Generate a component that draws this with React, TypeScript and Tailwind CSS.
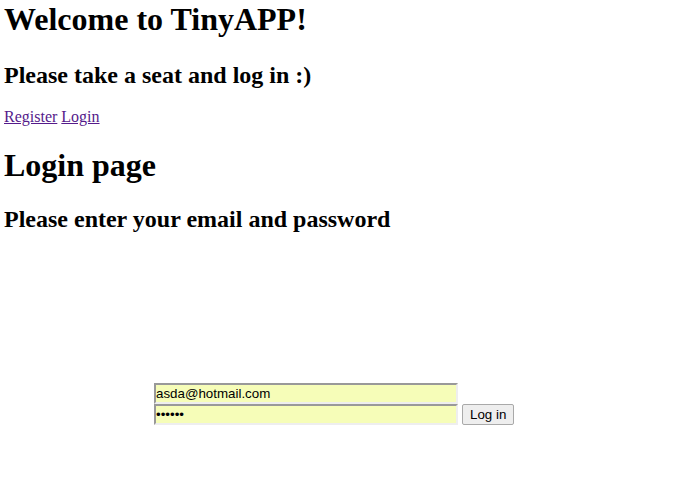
import React from "react";

const App = () => {
  return (
    <div className="min-h-[482px] bg-white px-1 pt-px font-['Liberation_Serif',serif] text-black">
      <h1 className="text-[32px] font-bold leading-[36.8px]">Welcome to TinyAPP!</h1>
      <h2 className="mt-[24px] text-[24px] font-bold leading-[27.6px]">Please take a seat and log in :)</h2>
      <p className="mt-[19px] text-[16px] leading-[18.4px]">
        <a href="#" className="text-[#551a8b] underline">Register</a>{" "}
        <a href="#" className="text-[#551a8b] underline">Login</a>
      </p>
      <h1 className="mt-[20px] text-[32px] font-bold leading-[36.8px]">Login page</h1>
      <h2 className="mt-[22px] text-[24px] font-bold leading-[27.6px]">Please enter your email and password</h2>

      <form className="ml-[150px] mt-[150px] flex items-end gap-1 font-['Liberation_Sans',Arial,sans-serif]">
        <div className="flex flex-col">
          <input
            type="email"
            defaultValue="asda@hotmail.com"
            className="h-[21px] w-[304px] border-2 border-t-[#999] border-l-[#999] border-r-[#eee] border-b-[#eee] bg-[#f6fdb8] px-0 text-[13.33px] text-black outline-none"
          />
          <input
            type="password"
            defaultValue="123456"
            className="h-[21px] w-[304px] border-2 border-t-[#999] border-l-[#999] border-r-[#eee] border-b-[#eee] bg-[#f6fdb8] px-0 text-[13.33px] text-black outline-none"
          />
        </div>
        <button
          type="button"
          className="h-[21px] rounded-[2px] border border-[#a9a9a9] bg-[#eeeeee] px-[7px] text-[13.33px] leading-none text-black"
        >
          Log in
        </button>
      </form>
    </div>
  );
};

export default App;
